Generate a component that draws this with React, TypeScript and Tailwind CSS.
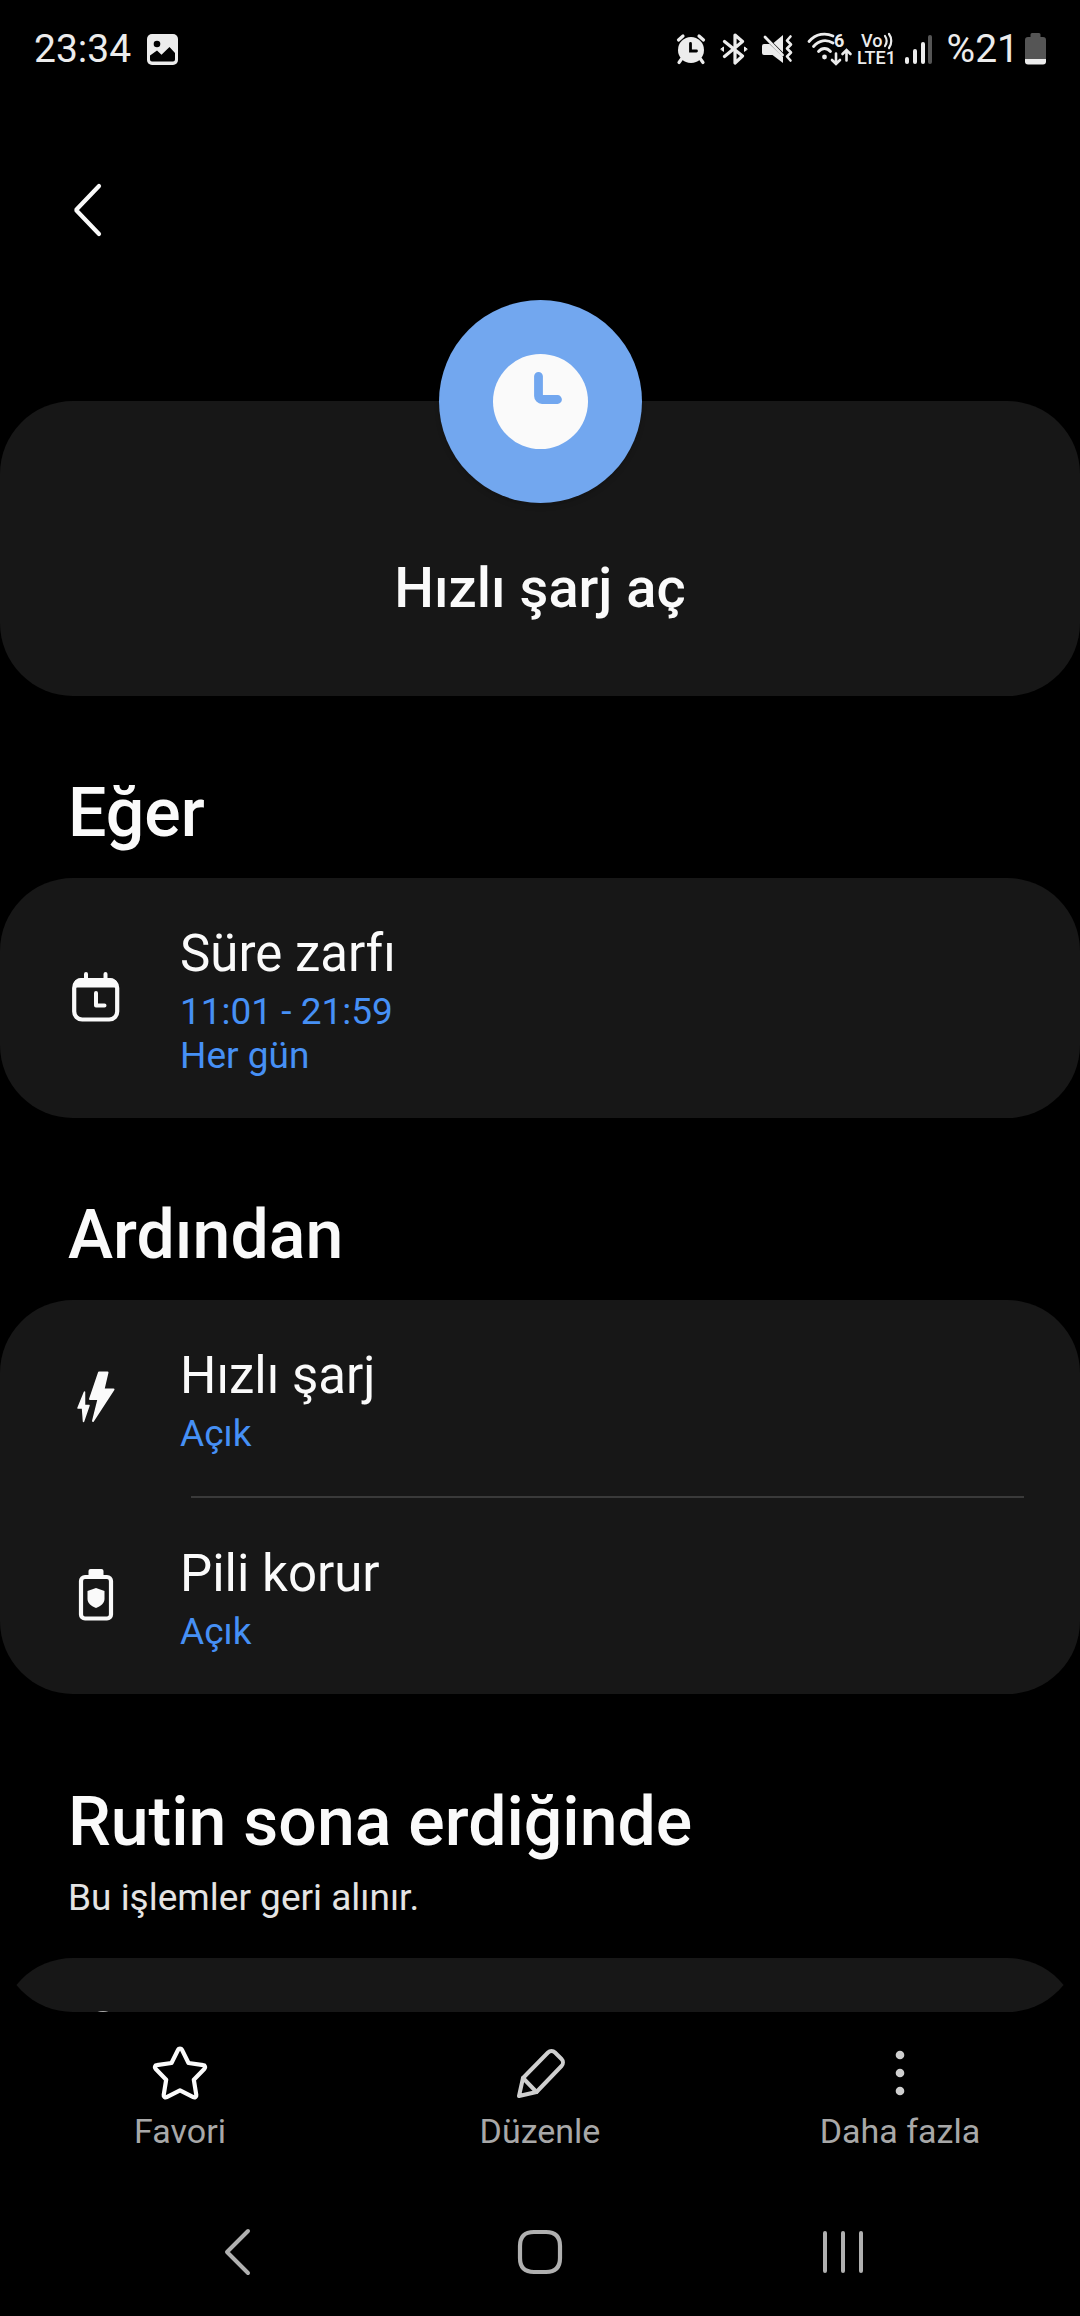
import React from "react";

const GalleryIcon = () => (
  <svg width="31" height="31" viewBox="0 0 31 31" aria-hidden="true">
    <rect width="31" height="31" rx="5" fill="#ececec" />
    <circle cx="10" cy="10" r="3.300" fill="#000" />
    <path d="M3 21.500l7-5 4.500 4.200L22.500 13l5.500 6v6.500a2 2 0 0 1-2 2H5a2 2 0 0 1-2-2z" fill="#000" />
  </svg>
);

const AlarmIcon = () => (
  <svg width="30" height="32" viewBox="0 0 30 32" fill="none" strokeLinecap="round" aria-hidden="true">
    <circle cx="15" cy="17" r="13" fill="#ececec" />
    <path d="M2.500 7L7 3M27.500 7L23 3M5.500 26l-2.500 3.500M24.500 26l2.500 3.500" stroke="#ececec" strokeWidth="3.200" />
    <path d="M14.500 10.500v7.500h6" stroke="#000" strokeWidth="2.800" />
  </svg>
);

const BluetoothIcon = () => (
  <svg width="28" height="32" viewBox="0 0 28 32" fill="none" stroke="#ececec" strokeLinecap="round" strokeLinejoin="round" aria-hidden="true">
    <path d="M4.500 8.500L22.500 23l-7.500 7V2l7.500 6.500L4.500 23.500" strokeWidth="3.200" />
    <path d="M1 16l2.500-2v4zM27 16l-2.500-2v4z" fill="#ececec" strokeWidth="1" />
  </svg>
);

const MuteIcon = () => (
  <svg width="31" height="32" viewBox="0 0 31 32" fill="none" aria-hidden="true">
    <path d="M2 11h5.500l13.500 13v6L10.500 22H2a2 2 0 0 1-2-2v-7a2 2 0 0 1 2-2z" fill="#ececec" />
    <path d="M21 2v17.500L11.500 10z" fill="#ececec" />
    <path d="M3 4l17.500 18" stroke="#ececec" strokeWidth="2.800" strokeLinecap="round" />
    <path d="M28.500 3.500l-3.500 4 4 4-4 4 4 4-4 4 3.500 4" stroke="#ececec" strokeWidth="2.600" strokeLinecap="round" strokeLinejoin="round" />
  </svg>
);

const WifiIcon = () => (
  <svg width="46" height="44" viewBox="0 -5 46 44" fill="none" stroke="#ececec" strokeWidth="2.800" strokeLinecap="round" aria-hidden="true">
    <path d="M2 9.500C9 1.500 18.500.5 26 4M6.500 14.500c5.500-6.500 13-7.500 19.500-3.500M11.500 19.500c3.500-4 8.500-4 12 0" />
    <circle cx="17.500" cy="25" r="2.400" fill="#ececec" stroke="none" />
    <path d="M29 21.500v10M25 28l4 4 4-4M39.500 28.500V18.500M35.500 22l4-4 4 4" strokeWidth="2.600" />
    <text x="27" y="15" fill="#ececec" stroke="none" fontSize="18" fontWeight="700" fontFamily="Roboto">6</text>
  </svg>
);

const VolteIcon = () => (
  <svg width="42" height="44" viewBox="0 -5 42 44" fill="none" aria-hidden="true">
    <text x="4" y="15" fill="#ececec" fontSize="18" fontWeight="500" fontFamily="Roboto">Vo</text>
    <path d="M28 4c2 3 2 7 0 10M32 2c3 4 3 10 0 14" stroke="#ececec" strokeWidth="2.200" strokeLinecap="round" />
    <text x="0" y="32" fill="#ececec" fontSize="18" fontWeight="500" fontFamily="Roboto">LTE1</text>
  </svg>
);

const SignalIcon = () => (
  <svg width="28" height="32" viewBox="0 0 28 32" fill="#ececec" aria-hidden="true">
    <rect x="0" y="24" width="4" height="7" rx="2" />
    <rect x="8" y="16" width="4" height="15" rx="2" />
    <rect x="16" y="9" width="4" height="22" rx="2" />
    <rect x="23" y="2" width="4" height="29" rx="2" fill="#555" />
  </svg>
);

const BatteryIcon = () => (
  <svg width="21" height="32" viewBox="0 0 21 32" aria-hidden="true">
    <path d="M7 0h7a1.500 1.500 0 0 1 1.500 1.500V4H18a3 3 0 0 1 3 3v19H0V7a3 3 0 0 1 3-3h2.500V1.500A1.500 1.500 0 0 1 7 0z" fill="#555" />
    <path d="M0 26h21v2.500a3 3 0 0 1-3 3H3a3 3 0 0 1-3-3z" fill="#ececec" />
  </svg>
);

const CalendarIcon = () => (
  <svg width="48" height="50" viewBox="0 0 48 50" fill="none" aria-hidden="true">
    <path d="M14 2v7M33.500 2v7" stroke="#fafafa" strokeWidth="4" strokeLinecap="round" />
    <rect x="2.200" y="8" width="43" height="39.500" rx="8" stroke="#fafafa" strokeWidth="4.200" />
    <path d="M1 20V14a8 8 0 0 1 8-8h29a8 8 0 0 1 8 8v6c-1-3-2-4.500-4-4.500H5.500C3 15.500 2 17 1 20z" fill="#fafafa" />
    <path d="M24 21v12.500h8.500" stroke="#fafafa" strokeWidth="4" strokeLinecap="round" strokeLinejoin="round" />
  </svg>
);

const BoltIcon = () => (
  <svg width="38" height="52" viewBox="0 0 38 52" fill="#fafafa" stroke="#fafafa" strokeWidth="2" strokeLinejoin="round" aria-hidden="true">
    <path d="M22 1.500h8.500L26.500 18.500h10L16 50l5.500-22H13z" />
    <path d="M7.500 21L1 37h4.500l1 13.500L12 34.500H7.500z" strokeWidth="1.500" />
  </svg>
);

const BatteryShieldIcon = () => (
  <svg width="36" height="52" viewBox="0 0 36 52" fill="none" aria-hidden="true">
    <rect x="10.500" y="0" width="15" height="8" rx="2" fill="#fafafa" />
    <rect x="3" y="8" width="30" height="41.500" rx="4" stroke="#fafafa" strokeWidth="4.200" />
    <path d="M18 19l8.500 3v8c0 4-4 7.500-8.500 9-4.500-1.500-8.500-5-8.500-9v-8z" fill="#fafafa" />
  </svg>
);

const StarIcon = () => (
  <svg width="56" height="56" viewBox="0 0 56 56" fill="none" stroke="#fafafa" strokeWidth="4.200" strokeLinejoin="round" aria-hidden="true">
    <path d="M26.100 4.700a2.100 2.100 0 0 1 3.800 0l6.600 13.300 14.800 2.200a2.100 2.100 0 0 1 1.200 3.600L41.800 34.700l2.500 15.300a2.100 2.100 0 0 1-3 2.200L28 45.300l-13.300 6.900a2.100 2.100 0 0 1-3-2.200l2.500-15.300L3.500 23.800a2.100 2.100 0 0 1 1.200-3.600L19.500 18z" />
  </svg>
);

const PencilIcon = () => (
  <svg width="56" height="56" viewBox="0 0 56 56" fill="none" stroke="#cfcfcf" strokeWidth="4" strokeLinejoin="round" strokeLinecap="round" aria-hidden="true">
    <path d="M11 33L36 7.500a5 5 0 0 1 7 0l6.500 6.500a5 5 0 0 1 0 7L24.500 47 7 51z" />
    <path d="M11 33l13.500 14" />
  </svg>
);

const MoreIcon = () => (
  <svg width="56" height="56" viewBox="0 0 56 56" fill="#cfcfcf" aria-hidden="true">
    <circle cx="28" cy="10" r="4.300" />
    <circle cx="28" cy="28" r="4.300" />
    <circle cx="28" cy="46" r="4.300" />
  </svg>
);

const SectionTitle = (props: { children: React.ReactNode }) => (
  <h2 className="text-[68px] leading-20 font-medium">{props.children}</h2>
);

const Card = (props: { children: React.ReactNode }) => (
  <div className="rounded-[73px] bg-[#171717]">{props.children}</div>
);

const RoutineRow = (props: { icon: React.ReactNode; title: string; lines: string[] }) => {
  return (
    <button type="button" className="flex w-full items-center pt-[46px] pr-14 pb-10 text-left">
      <span className="mr-[60px] mb-2 ml-18 flex w-12 shrink-0 justify-center">{props.icon}</span>
      <span className="flex flex-col">
        <span className="mb-1.5 text-[51px] leading-[60px]">{props.title}</span>
        {props.lines.map((line) => (
          <span key={line} className="text-[37px] leading-11 text-[#4690f5]">
            {line}
          </span>
        ))}
      </span>
    </button>
  );
};

const actions = [
  { label: "Favori", icon: <StarIcon /> },
  { label: "Düzenle", icon: <PencilIcon /> },
  { label: "Daha fazla", icon: <MoreIcon /> },
];

const App = () => {
  return (
    <div className="flex h-screen flex-col bg-black font-[Roboto,sans-serif] text-[#fafafa]">
      <header className="flex h-24 shrink-0 items-center justify-between px-[34px] pt-0.5 text-[39px] text-[#ececec]">
        <div className="flex items-center gap-4">
          <span>23:34</span>
          <GalleryIcon />
        </div>
        <div className="flex items-center">
          <div className="mr-1 flex items-center gap-3.5">
            <AlarmIcon />
            <BluetoothIcon />
            <MuteIcon />
            <WifiIcon />
          </div>
          <div className="flex items-center gap-1.5">
            <VolteIcon />
            <SignalIcon />
          </div>
          <span className="mr-1.5 ml-3.5">%21</span>
          <BatteryIcon />
        </div>
      </header>

      <main className="flex-1 overflow-hidden rounded-b-[73px]">
        <div className="flex h-[204px] items-start px-[58px] pt-[84px]">
          <button type="button" aria-label="Geri" className="flex size-[60px] items-center justify-center">
            <svg width="32" height="56" viewBox="0 0 32 56" fill="none" stroke="#fafafa" strokeWidth="4.200" strokeLinecap="round" strokeLinejoin="round">
              <path d="M27 4L4.500 27.500a1.500 1.500 0 0 0 0 1L27 52" />
            </svg>
          </button>
        </div>

        <section className="mt-[101px] flex flex-col items-center rounded-[73px] bg-[#171717] pb-[74px]">
          <div className="-mt-[101px] flex size-[203px] items-center justify-center rounded-full bg-[#72a7ef] shadow-md">
            <svg width="95" height="95" viewBox="0 0 95 95" fill="none" aria-hidden="true">
              <circle cx="47.500" cy="47.500" r="47.500" fill="#fafafa" />
              <path d="M45.500 22.300V42a3.500 3.500 0 0 0 3.500 3.500h15.500" stroke="#72a7ef" strokeWidth="8.800" strokeLinecap="round" />
            </svg>
          </div>
          <h1 className="mt-[51px] text-[56px] leading-[68px] font-medium">Hızlı şarj aç</h1>
        </section>

        <section>
          <div className="px-[68px] pt-[77px] pb-[25px]">
            <SectionTitle>Eğer</SectionTitle>
          </div>
          <Card>
            <RoutineRow icon={<CalendarIcon />} title="Süre zarfı" lines={["11:01 - 21:59", "Her gün"]} />
          </Card>
        </section>

        <section>
          <div className="px-[68px] pt-[77px] pb-[25px]">
            <SectionTitle>Ardından</SectionTitle>
          </div>
          <Card>
            <RoutineRow icon={<BoltIcon />} title="Hızlı şarj" lines={["Açık"]} />
            <hr className="mr-14 ml-[191px] border-t-2 border-[#3a3a3a]" />
            <RoutineRow icon={<BatteryShieldIcon />} title="Pili korur" lines={["Açık"]} />
          </Card>
        </section>

        <section>
          <div className="px-[68px] pt-[88px] pb-[38px]">
            <SectionTitle>Rutin sona erdiğinde</SectionTitle>
            <p className="mt-3.5 text-[37px] leading-11 text-[#e4e4e4]">Bu işlemler geri alınır.</p>
          </div>
          <Card>
            <div className="px-[88px] pt-[53px] pb-16">
              <svg width="30" height="30" viewBox="0 0 30 30" fill="none" stroke="#aaaaaa" strokeWidth="4" aria-hidden="true">
                <circle cx="15" cy="15" r="13" />
              </svg>
            </div>
          </Card>
        </section>
      </main>

      <div className="grid shrink-0 grid-cols-3 pt-[33px] pb-[38px]">
        {actions.map((action) => (
          <button key={action.label} type="button" className="flex flex-col items-center gap-2.5 text-[34px] leading-10 text-[#a8a8a8]">
            {action.icon}
            {action.label}
          </button>
        ))}
      </div>

      <nav className="grid h-[127px] shrink-0 grid-cols-3 items-center px-[86px] pb-0.5">
        <button type="button" aria-label="Geri" className="flex justify-center">
          <svg width="28" height="48" viewBox="0 0 28 48" fill="none" stroke="#b0b0b0" strokeWidth="4" strokeLinecap="round" strokeLinejoin="round">
            <path d="M25 3L4 24l21 21" />
          </svg>
        </button>
        <button type="button" aria-label="Ana ekran" className="flex justify-center">
          <svg width="46" height="46" viewBox="0 0 46 46" fill="none" stroke="#b0b0b0" strokeWidth="4.200">
            <path d="M17 3h12c9.500 0 14 4.500 14 14v12c0 9.500-4.500 14-14 14H17C7.500 43 3 38.500 3 29V17C3 7.500 7.500 3 17 3z" />
          </svg>
        </button>
        <button type="button" aria-label="Son uygulamalar" className="flex justify-center">
          <svg width="42" height="46" viewBox="0 0 42 46" stroke="#b0b0b0" strokeWidth="4" strokeLinecap="round">
            <path d="M3 4v38M21 4v38M39 4v38" />
          </svg>
        </button>
      </nav>
    </div>
  );
};

export default App;
